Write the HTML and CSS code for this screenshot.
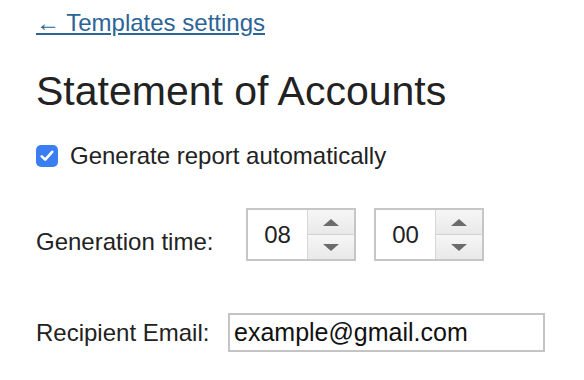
FILE: index.html
```html
<!DOCTYPE html>
<html lang="en">

<head>
    <meta charset="utf-8">
    <title>Statement of Accounts</title>
    <link rel="stylesheet" href="styles.css">
</head>

<body>
    <a class="tilbage" href="#">&larr; Templates settings</a>
    <h1>Statement of Accounts</h1>

    <label class="auto">
        <span class="boks">
            <svg width="14" height="12" viewBox="0 0 14 12">
                <path d="M1.8 6.4 L5.2 9.6 L12.2 1.8" fill="none" stroke="#fff" stroke-width="2.6" stroke-linecap="round" stroke-linejoin="round" />
            </svg>
        </span>
        Generate report automatically
    </label>

    <div class="linje tid">
        <span class="navn">Generation time:</span>
        <div class="spinner">
            <span class="tal">08</span>
            <div class="pile">
                <button class="op"><i></i></button>
                <button class="ned"><i></i></button>
            </div>
        </div>
        <div class="spinner">
            <span class="tal">00</span>
            <div class="pile">
                <button class="op"><i></i></button>
                <button class="ned"><i></i></button>
            </div>
        </div>
    </div>

    <div class="linje mail">
        <span class="navn">Recipient Email:</span>
        <input class="felt" type="text" value="example@gmail.com">
    </div>
</body>

</html>
```

FILE: styles.css
```css
body {
    margin: 0;
    padding: 9px 36px 0;
    font-family: "Liberation Sans", Arial, sans-serif;
    color: #222;
}

.tilbage {
    display: block;
    font-size: 24px;
    color: #2c6496;
    text-decoration: underline;
}

h1 {
    font-size: 41px;
    font-weight: normal;
    margin: 31px 0 0;
    color: #222;
}

.auto {
    display: flex;
    align-items: center;
    gap: 12px;
    font-size: 24px;
    margin-top: 27px;
}

.boks {
    width: 22px;
    height: 22px;
    border-radius: 5px;
    background: #3a7ef2;
    display: flex;
    align-items: center;
    justify-content: center;
}

.linje {
    display: flex;
    align-items: center;
    font-size: 24px;
}

.tid {
    margin-top: 38px;
}

.tid .navn {
    width: 210px;
    padding-top: 14px;
}

.spinner {
    display: flex;
    height: 49px;
    border: 2px solid #c6c6c6;
    margin-right: 18px;
}

.tal {
    width: 59px;
    display: flex;
    align-items: center;
    justify-content: center;
    border-right: 1px solid #d6d6d6;
    background: #fff;
}

.pile {
    width: 46px;
    display: flex;
    flex-direction: column;
}

.pile button {
    flex: 1;
    border: 0;
    padding: 0;
    background: linear-gradient(#f6f6f6, #e9e9e9);
    display: flex;
    align-items: center;
    justify-content: center;
}

.pile .op {
    border-bottom: 1px solid #d2d2d2;
}

.pile i {
    width: 0;
    height: 0;
    border-left: 8px solid transparent;
    border-right: 8px solid transparent;
}

.op i {
    border-bottom: 7px solid #6b6b6b;
}

.ned i {
    border-top: 7px solid #6b6b6b;
}

.mail {
    margin-top: 52px;
}

.mail .navn {
    width: 192px;
}

.felt {
    box-sizing: border-box;
    width: 317px;
    height: 39px;
    border: 2px solid #c4c4c4;
    padding: 0 4px;
    font-family: inherit;
    font-size: 25px;
    color: #111;
}
```
